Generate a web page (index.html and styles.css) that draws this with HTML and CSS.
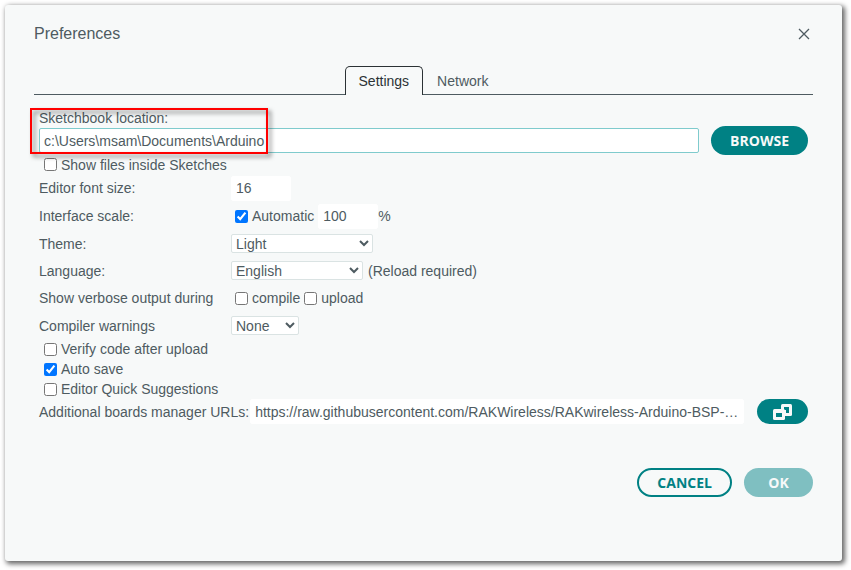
FILE: index.html
```html
<!DOCTYPE html>
<html lang="en">
  <head>
    <meta charset="UTF-8" />
    <meta name="viewport" content="width=device-width, initial-scale=1.0" />
    <title>Preferences</title>
    <link rel="stylesheet" href="styles.css">
  </head>
  <body>
    <main class="dialog">
      <header class="dialog-title">
        <h1>Preferences</h1>
        <button type="button" class="close" aria-label="Close">
          <svg width="12" height="12" viewBox="0 0 12 12">
            <path d="M1 1l10 10M11 1L1 11" fill="none" stroke="#4e5b61" stroke-width="1.3" />
          </svg>
        </button>
      </header>

      <nav class="tabs">
        <button type="button" class="tab active">Settings</button>
        <button type="button" class="tab">Network</button>
      </nav>

      <form class="settings">
        <div class="sketchbook">
          <label class="sketchbook-label" for="sketchbook">Sketchbook location:</label>
          <div class="browse-row">
            <input type="text" id="sketchbook" class="text-input path" value="c:\Users\msam\Documents\Arduino" />
            <button type="button" class="button primary">BROWSE</button>
          </div>
          <div class="highlight"></div>
        </div>
        <label class="check"><input type="checkbox" />Show files inside Sketches</label>

        <div class="row">
          <label class="name" for="font-size">Editor font size:</label>
          <input type="text" id="font-size" class="text-input small" value="16" />
        </div>
        <div class="row">
          <label class="name" for="scale">Interface scale:</label>
          <label class="inline-check automatic"><input type="checkbox" checked />Automatic</label>
          <input type="text" id="scale" class="text-input small" value="100" />
          <span>%</span>
        </div>
        <div class="row short">
          <label class="name" for="theme">Theme:</label>
          <select id="theme" class="theme"><option>Light</option></select>
        </div>
        <div class="row short">
          <label class="name" for="language">Language:</label>
          <select id="language" class="language"><option>English</option></select>
          <span class="note">(Reload required)</span>
        </div>
        <div class="row">
          <span class="name">Show verbose output during</span>
          <label class="inline-check"><input type="checkbox" />compile</label>
          <label class="inline-check"><input type="checkbox" />upload</label>
        </div>
        <div class="row short">
          <label class="name" for="warnings">Compiler warnings</label>
          <select id="warnings" class="warnings"><option>None</option></select>
        </div>

        <label class="check"><input type="checkbox" />Verify code after upload</label>
        <label class="check"><input type="checkbox" checked />Auto save</label>
        <label class="check"><input type="checkbox" />Editor Quick Suggestions</label>

        <div class="urls">
          <label for="urls">Additional boards manager URLs:</label>
          <input type="text" id="urls" class="text-input" value="https://raw.githubusercontent.com/RAKWireless/RAKwireless-Arduino-BSP-Index/main/package_rakwireless_index.json" />
          <button type="button" class="button primary icon" aria-label="Edit URLs">
            <svg width="19" height="16" viewBox="0 0 19 16">
              <rect x="8" y="0" width="11" height="12" rx="1.5" fill="#f7f9f9" />
              <path d="M11 3h5v6h-3V6h-2z" fill="#008184" />
              <rect x="0" y="5" width="12" height="11" rx="1.5" fill="#f7f9f9" />
              <rect x="3" y="9" width="6" height="4" fill="#008184" />
            </svg>
          </button>
        </div>
      </form>

      <footer class="actions">
        <button type="button" class="button secondary">CANCEL</button>
        <button type="button" class="button primary ok" disabled>OK</button>
      </footer>
    </main>
  </body>
</html>
```

FILE: styles.css
```css
* {
  box-sizing: border-box;
}
body {
  margin: 0;
  padding: 5px 9px 9px 5px;
  min-height: 100vh;
  display: flex;
  background: #fff;
  color: #4e5b61;
  font: 14px/16px "Liberation Sans", Arial, sans-serif;
}
button,
input,
select {
  font: inherit;
  color: inherit;
}
.dialog {
  flex: 1;
  min-width: 0;
  padding: 16px 29px;
  background: #f7f9f9;
  border-radius: 3px;
  box-shadow: 2px 2px 5px 1px rgba(0, 0, 0, 0.6);
}
.dialog-title {
  display: flex;
  justify-content: space-between;
  align-items: center;
  height: 26px;
}
h1 {
  margin: 0;
  font-size: 16px;
  font-weight: normal;
  line-height: 20px;
}
.close {
  display: flex;
  padding: 3px;
  border: 0;
  background: none;
}
.tabs {
  display: flex;
  justify-content: center;
  margin-top: 19px;
  border-bottom: 1px solid #4e5b61;
}
.tab {
  height: 28px;
  padding: 0 13px;
  border: 1px solid transparent;
  border-bottom: 0;
  background: none;
}
.tab.active {
  height: 29px;
  margin-bottom: -1px;
  border-color: #2b3235;
  border-radius: 5px 5px 0 0;
  background: #f7f9f9;
  color: #2b3235;
}
.settings {
  padding: 15px 5px 0;
}
.sketchbook {
  position: relative;
}
.sketchbook-label {
  display: block;
}
.browse-row {
  display: flex;
  align-items: center;
  gap: 12px;
}
/* red frame drawn over the location field */
.highlight {
  position: absolute;
  top: -2px;
  left: -9px;
  width: 238px;
  height: 46px;
  border: 2px solid #f00;
  filter: drop-shadow(3px 3px 2px rgba(0, 0, 0, 0.5));
  pointer-events: none;
}
.text-input {
  height: 25px;
  padding: 0 4px;
  border: 1px solid #fff;
  border-radius: 2px;
  background: #fff;
  flex: 1;
  min-width: 0;
  text-overflow: ellipsis;
}
.text-input.path {
  border-color: #7fcbcd;
}
.text-input.small {
  flex: none;
  width: 60px;
}
.check {
  display: flex;
  align-items: center;
  height: 20px;
}
.sketchbook + .check {
  height: 19px;
}
input[type="checkbox"] {
  width: 13px;
  height: 13px;
  margin: 0 4px 0 5px;
}
.row {
  display: flex;
  align-items: center;
  height: 28px;
}
.row.short {
  height: 27px;
}
.name {
  width: 192px;
}
.inline-check {
  display: flex;
  align-items: center;
}
.inline-check input[type="checkbox"] {
  margin: 0 4px;
}
.automatic {
  margin-right: 4px;
}
select {
  height: 19px;
  padding: 0;
  border: 1px solid #dae3e3;
  border-radius: 2px;
  background: #fff;
}
.theme {
  width: 142px;
}
.language {
  width: 132px;
}
.warnings {
  width: 68px;
}
.note {
  margin-left: 5px;
}
.urls {
  display: flex;
  align-items: center;
}
.urls .text-input {
  margin: 0 13px 0 1px;
}
.button {
  height: 29px;
  padding: 0 19px;
  border: 0;
  border-radius: 15px;
  font: bold 14px/20px "Open Sans", sans-serif;
}
.primary {
  background: #008184;
  color: #f7f9f9;
}
.secondary {
  padding: 0 18px;
  border: 2px solid #008184;
  background: none;
  color: #008184;
}
.icon {
  display: flex;
  align-items: center;
  justify-content: center;
  width: 51px;
  height: 25px;
  padding: 0;
}
.ok {
  width: 69px;
}
.ok:disabled {
  background: #7fbfc1;
}
.actions {
  display: flex;
  justify-content: flex-end;
  gap: 12px;
  margin-top: 44px;
}
```
